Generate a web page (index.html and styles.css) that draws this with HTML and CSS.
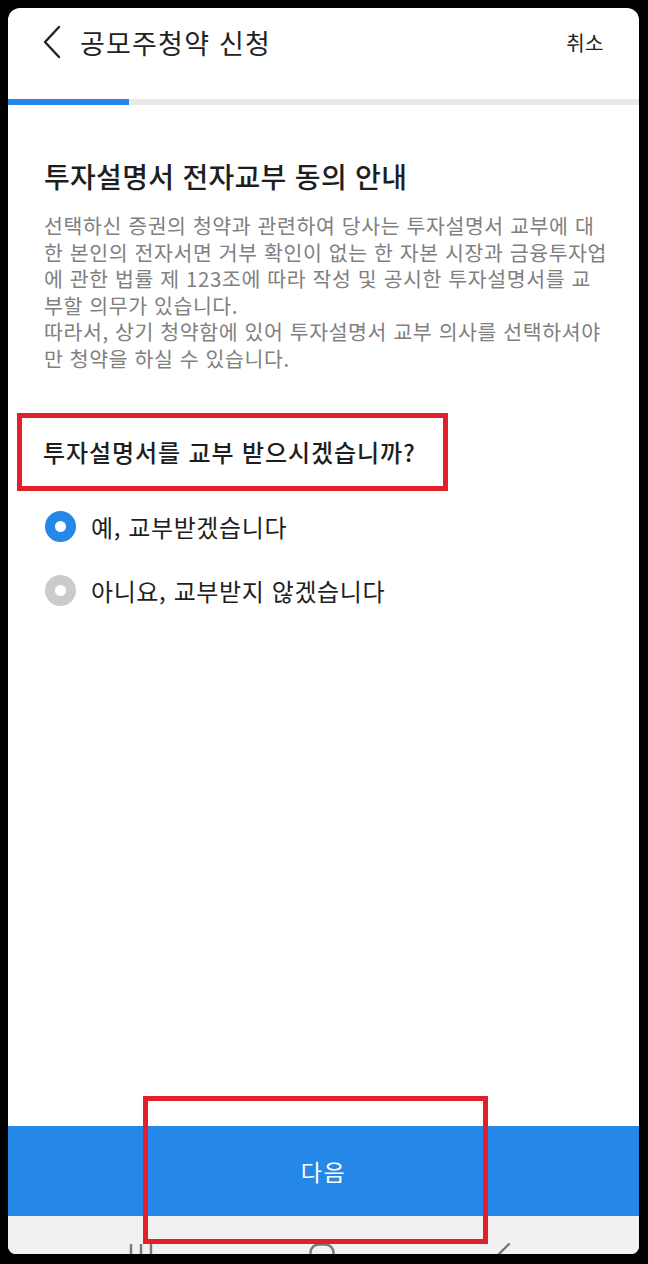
FILE: index.html
```html
<!DOCTYPE html>
<html lang="ko">
<head>
    <meta charset="utf-8">
    <title>공모주청약 신청</title>
    <link rel="stylesheet" href="styles.css">
</head>
<body>
    <div class="screen">
        <div class="header">
            <button class="back" aria-label="뒤로">
                <svg width="20" height="34" viewBox="0 0 20 34">
                    <path d="M17 2 L3 17 L17 32" fill="none" stroke="#222" stroke-width="2.4" stroke-linecap="round" stroke-linejoin="round"/>
                </svg>
            </button>
            <h1 class="title">공모주청약 신청</h1>
            <a class="cancel" href="#">취소</a>
        </div>

        <div class="progress"><div class="progress-fill"></div></div>

        <div class="content">
            <h2 class="heading">투자설명서 전자교부 동의 안내</h2>
            <p class="desc">선택하신 증권의 청약과 관련하여 당사는 투자설명서 교부에 대한 본인의 전자서면 거부 확인이 없는 한 자본 시장과 금융투자업에 관한 법률 제 123조에 따라 작성 및 공시한 투자설명서를 교부할 의무가 있습니다.<br>따라서, 상기 청약함에 있어 투자설명서 교부 의사를 선택하셔야만 청약을 하실 수 있습니다.</p>

            <div class="question">투자설명서를 교부 받으시겠습니까?</div>

            <label class="option">
                <input type="radio" name="receive" checked>
                <span class="radio"></span>
                <span>예, 교부받겠습니다</span>
            </label>
            <label class="option">
                <input type="radio" name="receive">
                <span class="radio"></span>
                <span>아니요, 교부받지 않겠습니다</span>
            </label>
        </div>

        <button class="next">다음</button>

        <div class="navbar">
            <svg width="26" height="22" viewBox="0 0 26 22">
                <path d="M3 1 V21 M13 1 V21 M23 1 V21" stroke="#777" stroke-width="2.4" fill="none"/>
            </svg>
            <svg width="26" height="26" viewBox="0 0 26 26">
                <rect x="1.5" y="1.5" width="23" height="23" rx="8" fill="none" stroke="#777" stroke-width="2.4"/>
            </svg>
            <svg width="18" height="28" viewBox="0 0 18 28">
                <path d="M16 1 L3 14 L16 27" fill="none" stroke="#777" stroke-width="2.4" stroke-linecap="round"/>
            </svg>
        </div>

        <div class="mark"></div>
    </div>
</body>
</html>
```

FILE: styles.css
```css
html, body {
    margin: 0;
    background-color: #000;
}
body {
    padding: 8px 9px 10px 8px;
    font-family: "Noto Sans CJK KR", "Noto Sans", sans-serif;
    color: #1e1e1e;
}
.screen {
    position: relative;
    height: 1246px;
    background-color: #fff;
    border-radius: 12px 12px 8px 8px;
    overflow: hidden;
    display: flex;
    flex-direction: column;
}
.header {
    height: 68px;
    display: flex;
    align-items: center;
    padding: 0 35px 0 34px;
    flex-shrink: 0;
}
.back {
    width: 20px;
    height: 34px;
    padding: 0;
    border: none;
    background: none;
    display: flex;
}
.title {
    flex: 1;
    margin: 0 0 0 18px;
    font-size: 27px;
    font-weight: 400;
    letter-spacing: 1.2px;
    color: #222;
}
.cancel {
    font-size: 20px;
    letter-spacing: 0.5px;
    color: #222;
    text-decoration: none;
}
.progress {
    margin-top: 23px;
    height: 6px;
    background-color: #e9e9e9;
    flex-shrink: 0;
}
.progress-fill {
    width: 121px;
    height: 100%;
    background-color: #2787e6;
}
.content {
    flex: 1;
    padding: 0 31px 0 36px;
}
.heading {
    margin: 53px 0 0;
    font-size: 28px;
    font-weight: 500;
    letter-spacing: 0.3px;
    line-height: 36px;
    color: #1e1e1e;
}
.desc {
    margin: 18px 0 0;
    font-size: 20.5px;
    letter-spacing: 0.6px;
    line-height: 26.6px;
    color: #808080;
}
.question {
    margin: 41px 0 0 -27px;
    width: 431px;
    box-sizing: border-box;
    border: 5px solid #e21f2b;
    padding: 18px 0 18px 21px;
    font-size: 24px;
    font-weight: 500;
    letter-spacing: 0.9px;
    line-height: 32px;
}
.question + .option {
    margin-top: 4px;
}
.option {
    display: flex;
    align-items: center;
    height: 64px;
    font-size: 24px;
    font-weight: 400;
    letter-spacing: 0.6px;
    color: #1e1e1e;
}
.option input {
    display: none;
}
.radio {
    width: 31px;
    height: 31px;
    box-sizing: border-box;
    border-radius: 50%;
    border: 10.5px solid #cbcbcb;
    background-color: #fff;
    margin: 0 15px 0 1px;
}
.option input:checked + .radio {
    border-color: #2587e8;
}
.next {
    height: 90px;
    flex-shrink: 0;
    border: none;
    background-color: #2587e8;
    color: #fff;
    font-family: inherit;
    font-size: 23px;
    font-weight: 400;
    letter-spacing: 1.5px;
}
.navbar {
    height: 38px;
    flex-shrink: 0;
    box-sizing: border-box;
    background-color: #f1f1f1;
    display: flex;
    align-items: flex-start;
    padding-top: 27px;
}
.navbar svg {
    flex-shrink: 0;
}
.navbar svg:nth-child(1) {
    margin-left: 120px;
}
.navbar svg:nth-child(2) {
    margin-left: 155px;
}
.navbar svg:nth-child(3) {
    margin-left: 158px;
}
/* highlight frame drawn over the next button */
.mark {
    position: absolute;
    left: 135px;
    top: 1088px;
    width: 345px;
    height: 148px;
    box-sizing: border-box;
    border: 5px solid #e21f2b;
}
```
